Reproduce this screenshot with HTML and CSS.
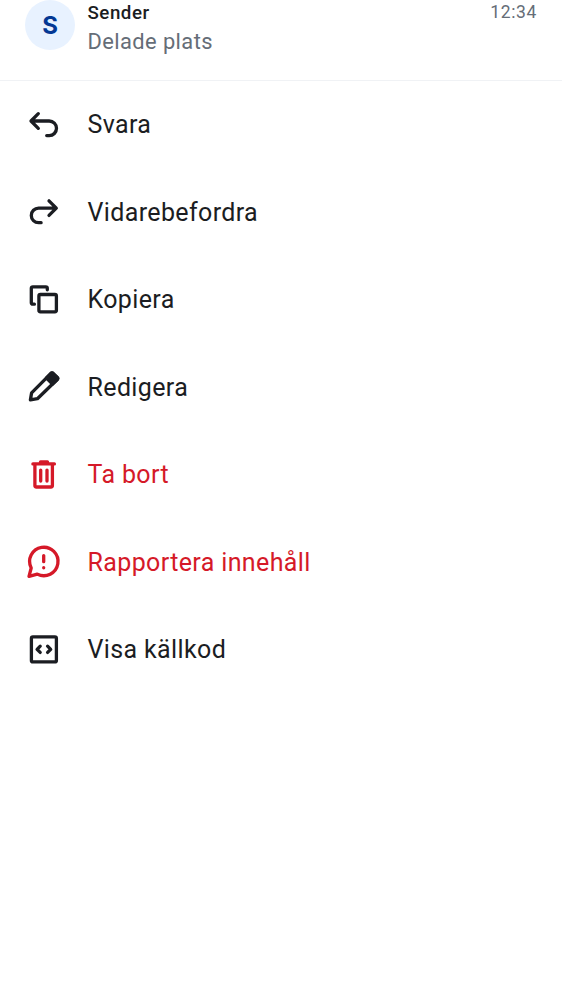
FILE: index.html
```html
<!DOCTYPE html>
<html lang="sv"><head><meta charset="utf-8"><title>Meddelande</title><link rel="stylesheet" href="styles.css"></head>
<body><main class="sheet">
<header class="summary"><div class="avatar">S</div><div class="message"><div class="name">Sender</div><div class="preview">Delade plats</div></div><time class="time">12:34</time></header>
<ul class="actions">
<li class="action"><svg class="icon" viewBox="0 0 38 38"><path d="M13.300 7.700 6 15l7.300 7.300M6.500 15h17.700a7.300 7.300 0 0 1 0 14.600h-2.500"/></svg><span>Svara</span></li>
<li class="action"><svg class="icon" viewBox="0 0 38 38"><path d="m24 7.800 7.300 7.300-7.300 7.300M30.800 15.100H13.600a7.300 7.300 0 0 0 0 14.600h2.500"/></svg><span>Vidarebefordra</span></li>
<li class="action"><svg class="icon" viewBox="0 0 38 38"><rect x="13.900" y="13.500" width="17.500" height="17.300" rx="1.500"/><path d="M9.400 23.200H7.800q-1.500 0-1.500-1.500V7.300q0-1.500 1.500-1.500h13q1.500 0 1.500 1.500v1.500"/></svg><span>Kopiera</span></li>
<li class="action"><svg class="icon" viewBox="0 0 38 38"><path d="m5.400 31.900 1.200-7L26 5.300q1-.9 2 0l4.200 4.200q1 1 0 2L12.400 30.700z"/><path class="solid" d="m21.500 10 4.500-4.700q1-.9 2 0l4.200 4.200q1 1 0 2l-4.700 4.500z"/></svg><span>Redigera</span></li>
<li class="action danger"><svg class="icon" viewBox="0 0 38 38"><path d="M7.900 7.900h21.500M15.500 5.900h7M9.900 8v21.500q0 1.500 1.500 1.500h14.500q1.500 0 1.500-1.500V8M15.700 14.100v11M22 14.100v11"/></svg><span>Ta bort</span></li>
<li class="action danger"><svg class="icon" viewBox="0 0 38 38"><path d="M4 33.400 6.200 25A14.200 14.200 0 1 1 12.300 31.100z"/><path d="M18.700 12.600v6.100M18.700 24.700v.1"/></svg><span>Rapportera innehåll</span></li>
<li class="action"><svg class="icon" viewBox="0 0 38 38"><rect x="6.400" y="5.900" width="25" height="25" rx="1.500"/><path d="m15.200 15.200-3.100 3.100 3.100 3.100M22.600 15.200l3.100 3.100-3.100 3.100"/></svg><span>Visa källkod</span></li>
</ul></main></body></html>
```
FILE: styles.css
```css
body{margin:0;background:#fff;color:#1b1d22;font-family:Roboto,sans-serif}
.sheet{width:562px;height:1000px;overflow:hidden}
.summary{display:flex;height:81px;box-sizing:border-box;padding:0 25px;border-bottom:1px solid #f0f2f5}
.avatar{width:50px;height:50px;border-radius:50%;background:#e8f2ff;color:#043894;font:700 24px/51px Inter,sans-serif;text-align:center}
.message{flex:1;padding-left:12.500px}
.name{font-size:18.750px;line-height:26px;font-weight:500;letter-spacing:.5px}
.preview{color:#656d77;font-size:21.875px;line-height:32px;letter-spacing:.42px}
.time{color:#656d77;font-size:17.500px;line-height:24px;letter-spacing:.65px}
.actions{margin:0;padding:0;list-style:none}
.action{display:flex;align-items:center;height:87.500px;padding-left:25px;gap:24.500px;font-size:25px;letter-spacing:.37px}
.icon{width:38px;height:38px;fill:none;stroke:currentColor;stroke-width:3.300;stroke-linecap:round;stroke-linejoin:round}
.solid{fill:currentColor}
.danger{color:#d51928}
```
